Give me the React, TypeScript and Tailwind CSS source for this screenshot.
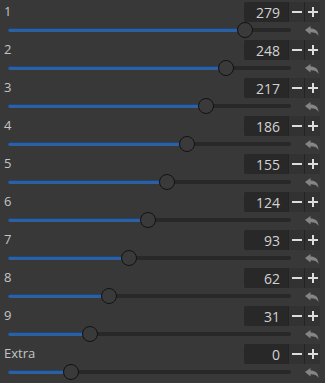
const rows = [
  { label: '1', value: 279 },
  { label: '2', value: 248 },
  { label: '3', value: 217 },
  { label: '4', value: 186 },
  { label: '5', value: 155 },
  { label: '6', value: 124 },
  { label: '7', value: 93 },
  { label: '8', value: 62 },
  { label: '9', value: 31 },
  { label: 'Extra', value: 0 },
]

function ResetIcon() {
  return (
    <svg width="14" height="10" viewBox="0 0 14 10">
      <path d="M0 4 L5.5 0 L5.5 2.6 C10 2.6 13.5 5 13.5 10 C12 7.2 9.5 6.2 5.5 6.2 L5.5 8.6 Z" fill="#858585" />
    </svg>
  )
}

function Row({ label, value }: { label: string; value: number }) {
  const pos = 62.6 + value * 0.625
  return (
    <div className="h-[38px] flex flex-col">
      <div className="flex items-center justify-between h-[23px] pt-[1px]">
        <span className="pl-[4px] text-[13px] text-[#c4c4c4]">{label}</span>
        <div className="flex h-[20px] w-[76px] mr-[5px] rounded-[2px] bg-[#282828] overflow-hidden">
          <div className="flex-1 flex items-center justify-end pr-[8px] text-[14px] text-[#d2d2d2]">{value}</div>
          <div className="w-[16px] flex items-center justify-center bg-[#323232] border-l border-[#242424]">
            <div className="w-[10px] h-[2px] bg-[#dcdcdc]" />
          </div>
          <div className="w-[16px] flex items-center justify-center bg-[#323232] border-l border-[#242424] relative">
            <div className="w-[10px] h-[2px] bg-[#dcdcdc]" />
            <div className="absolute w-[2px] h-[10px] bg-[#dcdcdc]" />
          </div>
        </div>
      </div>
      <div className="flex items-center h-[14px]">
        <div className="relative ml-[8px] w-[283px] h-[4px] rounded-full bg-[#282828]">
          <div className="h-full rounded-full bg-[#2c60a0] border-t border-[#1f4575]" style={{ width: pos }} />
          <div
            className="absolute top-1/2 w-[16px] h-[16px] -translate-x-1/2 -translate-y-1/2 rounded-full bg-[#3a3a3a] border border-[#121212]"
            style={{ left: pos }}
          />
        </div>
        <div className="ml-auto mr-[6px] mt-[1px]">
          <ResetIcon />
        </div>
      </div>
    </div>
  )
}

export default function App() {
  return (
    <div className="w-[325px] h-[383px] bg-[#383838] overflow-hidden" style={{ fontFamily: '"Open Sans", "Liberation Sans", sans-serif' }}>
      {rows.map((r) => (
        <Row key={r.label} label={r.label} value={r.value} />
      ))}
    </div>
  )
}
